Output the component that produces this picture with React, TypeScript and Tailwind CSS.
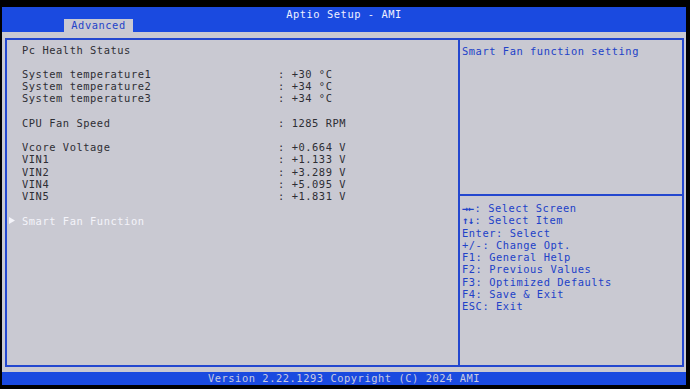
import React from 'react';

const readings: { label: string; value: string }[][] = [
  [
    { label: 'System temperature1', value: '+30 °C' },
    { label: 'System temperature2', value: '+34 °C' },
    { label: 'System temperature3', value: '+34 °C' },
  ],
  [{ label: 'CPU Fan Speed', value: '1285 RPM' }],
  [
    { label: 'Vcore Voltage', value: '+0.664 V' },
    { label: 'VIN1', value: '+1.133 V' },
    { label: 'VIN2', value: '+3.289 V' },
    { label: 'VIN4', value: '+5.095 V' },
    { label: 'VIN5', value: '+1.831 V' },
  ],
];

const helpKeys: [string, string][] = [
  ['→←', ': Select Screen'],
  ['↑↓', ': Select Item'],
  ['', 'Enter: Select'],
  ['', '+/-: Change Opt.'],
  ['', 'F1: General Help'],
  ['', 'F2: Previous Values'],
  ['', 'F3: Optimized Defaults'],
  ['', 'F4: Save & Exit'],
  ['', 'ESC: Exit'],
];

export default function App() {
  return (
    <div className="w-[690px] h-[389px] bg-black flex flex-col pt-[7px] pl-[2px] pr-[4px] pb-[4px] overflow-hidden font-['DejaVu_Sans_Mono','Liberation_Mono',monospace] text-[10.4px] tracking-[0.55px] leading-[12.25px]">
      {/* header bar */}
      <div className="h-[25px] bg-[#1a4ae0] flex flex-col">
        <div className="h-[12px] flex justify-center text-[#eef0ff] pt-[1px]">Aptio Setup - AMI</div>
        <div className="flex-1 flex items-end pl-[62px]">
          <div className="h-[13px] w-[69px] bg-[#c9c9d3] text-[#2343c9] flex items-center justify-center">
            Advanced
          </div>
        </div>
      </div>

      {/* body */}
      <div className="flex-1 bg-[#c9c9d2] pt-[6px] pl-[3px] pr-[2px] pb-[5px] flex">
        <div className="flex-1 flex border-2 border-[#2347cf]">
          <div className="w-[451px] pl-[15px] pt-[4px] text-[#2e2e34]">
            <div>Pc Health Status</div>
            <div className="mt-[11.25px]">
              {readings.map((group, gi) => (
                <div key={gi} className={gi > 0 ? 'mt-[12.25px]' : ''}>
                  {group.map((r) => (
                    <div key={r.label} className="grid grid-cols-[256px_1fr]">
                      <span>{r.label}</span>
                      <span>: {r.value}</span>
                    </div>
                  ))}
                </div>
              ))}
            </div>
            <div className="mt-[12.25px] flex items-center text-[#f4f4fa] -ml-[13px]">
              <svg width="6" height="7" viewBox="0 0 6 7" className="mr-[7px]">
                <path d="M0 0 L6 3.5 L0 7 Z" fill="#f4f4fa" />
              </svg>
              <span>Smart Fan Function</span>
            </div>
          </div>
          <div className="flex-1 flex flex-col border-l-2 border-[#2347cf] text-[#2141c8]">
            <div className="h-[156px] pl-[2px] pt-[5px] border-b-2 border-[#2347cf]">Smart Fan function setting</div>
            <div className="pl-[2px] pt-[6px]">
              {helpKeys.map(([arrows, rest]) => (
                <div key={rest}>
                  {arrows && <span className="font-bold tracking-[-0.5px] mr-[1px]">{arrows}</span>}
                  {rest}
                </div>
              ))}
            </div>
          </div>
        </div>
      </div>

      {/* footer */}
      <div className="h-[13px] bg-[#1a4ae0] flex items-center justify-center text-[#c9cbe0]">
        Version 2.22.1293 Copyright (C) 2024 AMI
      </div>
    </div>
  );
}
